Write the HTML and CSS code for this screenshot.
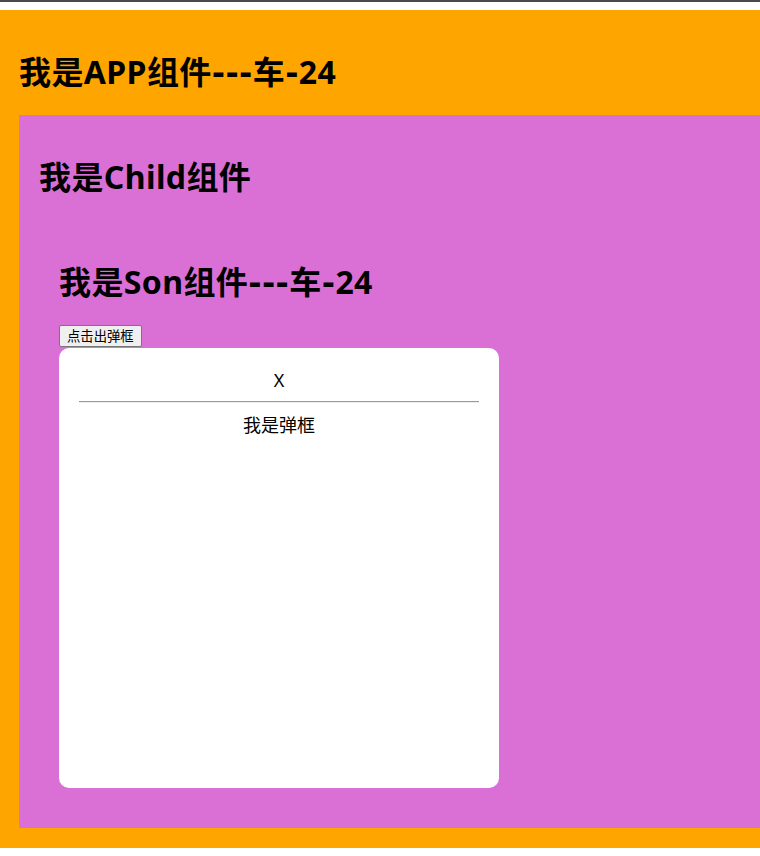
FILE: index.html
```html
<!DOCTYPE html>
<html lang="zh-CN">
<head>
<meta charset="utf-8">
<title>App</title>
<link rel="stylesheet" href="styles.css">
</head>
<body>
<div class="chrome"></div>
<div class="page">
  <div class="app">
    <h1 class="title">我是APP组件<span class="dash">---</span>车<span class="dash">-</span>24</h1>
    <div class="child">
      <h1 class="title">我是Child组件</h1>
      <div class="son">
        <h1 class="title">我是Son组件<span class="dash">---</span>车<span class="dash">-</span>24</h1>
        <div class="btn-row"><button class="btn">点击出弹框</button></div>
        <div class="modal">
          <div class="modal-close">X</div>
          <hr class="modal-rule">
          <div class="modal-body">我是弹框</div>
        </div>
      </div>
    </div>
  </div>
</div>
</body>
</html>
```

FILE: styles.css
```css
html, body {
  margin: 0;
  padding: 0;
  background: #fff;
}
body {
  font-family: "Noto Sans", "Noto Sans CJK SC", sans-serif;
  color: #000;
}
.chrome {
  height: 2px;
  background: #4a4a4a;
}
.page {
  padding: 8px 0;
  overflow: hidden;
}
.app {
  background: #ffa500;
  padding: 20px 0 20px 19px;
}
.title {
  font-size: 32px;
  font-weight: 700;
  line-height: 42px;
  margin: 21.44px 0;
  letter-spacing: 0.4px;
}
.dash {
  font-family: "DejaVu Sans", sans-serif;
  line-height: 1;
}
.child {
  background: #da70d6;
  padding: 20px 0 20px 20px;
}
.son {
  padding: 20px 0 20px 20px;
}
.btn-row {
  height: 23px;
}
.btn {
  font-family: "Noto Sans CJK SC", sans-serif;
  font-size: 13.33px;
  line-height: 16px;
  height: 22px;
  padding: 1px 7px;
  border: 1px solid #767676;
  border-radius: 2px;
  background: #efefef;
  color: #000;
  display: block;
}
.modal {
  width: 400px;
  height: 400px;
  padding: 20px;
  background: #fff;
  border-radius: 10px;
  text-align: center;
  font-size: 18px;
  line-height: 24px;
}
.modal-close {
  font-family: "Noto Sans", sans-serif;
  line-height: 25px;
}
.modal-rule {
  margin: 8px 0;
  border: 0;
  border-top: 1px solid #9a9a9a;
  border-bottom: 1px solid #eeeeee;
}
.modal-body {
  font-family: "Noto Sans CJK SC", sans-serif;
  padding-top: 1px;
}
```
